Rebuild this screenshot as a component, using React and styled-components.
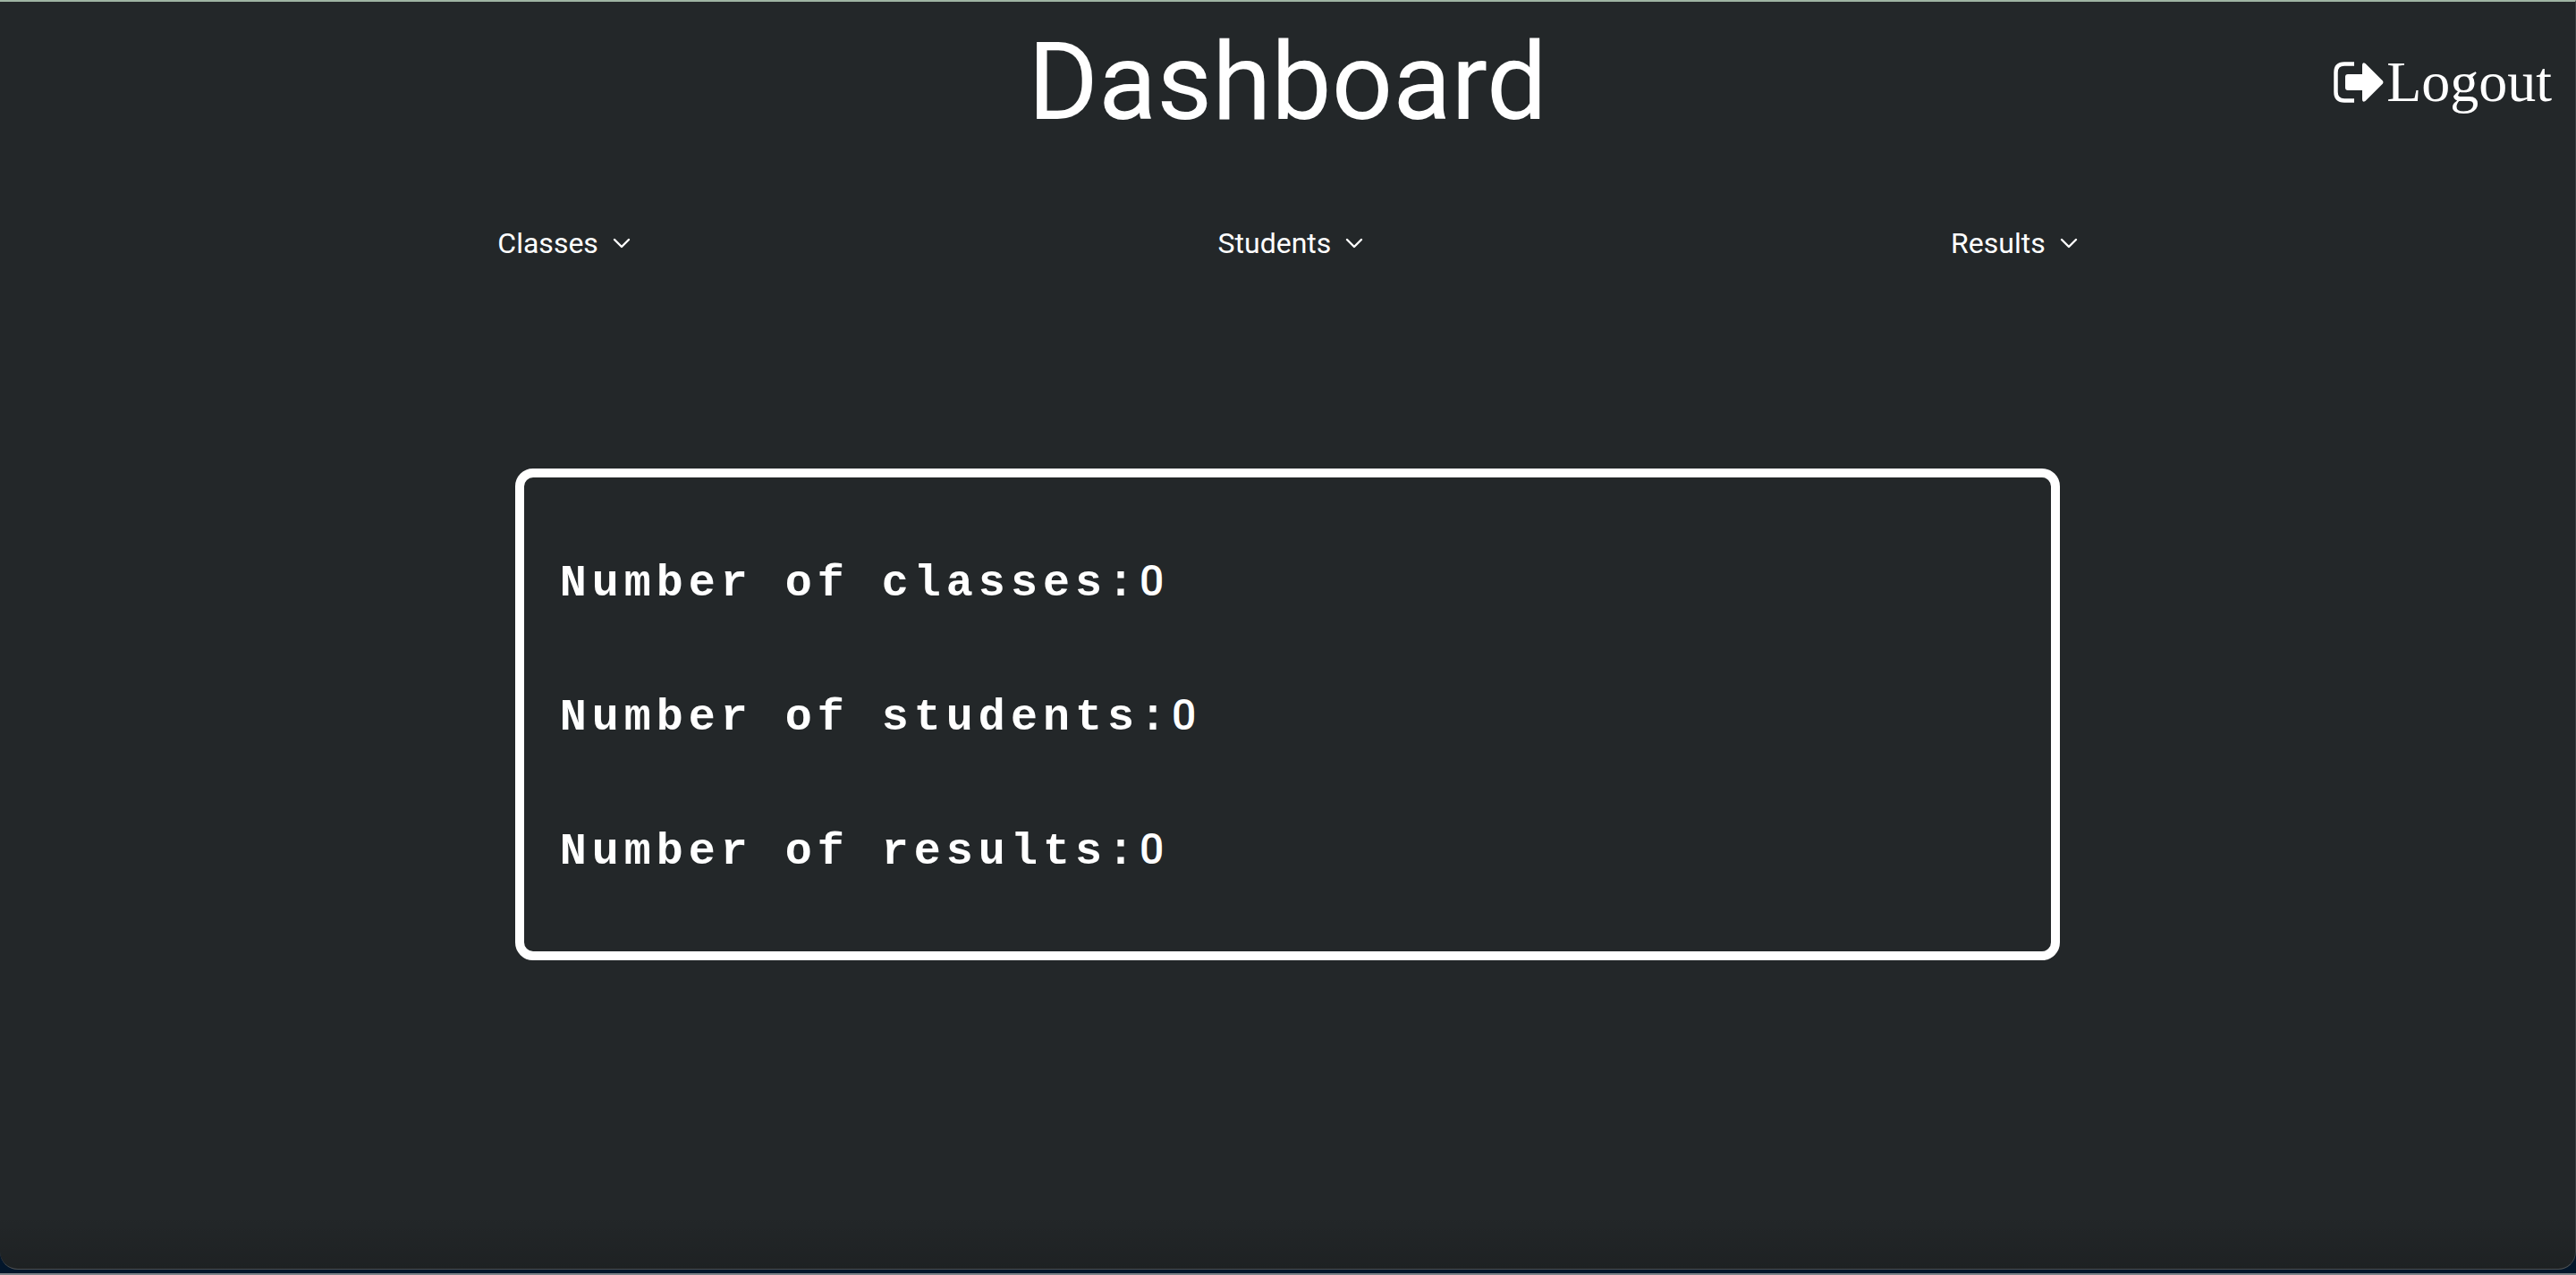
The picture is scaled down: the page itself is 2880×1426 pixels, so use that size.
import React from "react";
import styled, { createGlobalStyle } from "styled-components";

const GlobalStyle = createGlobalStyle`
  * { box-sizing: border-box; }
  html, body, #root { height: 100%; }
  body { margin: 0; background: #03162b; }
`;

const Desktop = styled.div`
  display: flex;
  flex-direction: column;
  min-height: 100vh;
  padding-bottom: 4px;
  background: #03162b;
  border-bottom: 2px solid #7c8288;
`;

const Window = styled.div`
  flex: 1;
  display: flex;
  flex-direction: column;
  color: #fff;
  background: linear-gradient(to bottom, rgba(0, 0, 0, 0) calc(100% - 60px), rgba(0, 0, 0, 0.15)), #232729;
  border-top: 2px solid #9fb5a3;
  border-right: 1px solid #3c4042;
  border-bottom: 1px solid #4c4f51;
  border-radius: 0 0 20px 20px;
`;

const Header = styled.header`
  display: grid;
  grid-template-columns: 1fr auto 1fr;
  align-items: center;
  height: 180px;
  padding: 0 26px;
`;

const Title = styled.h1`
  grid-column: 2;
  margin: 0;
  font: 400 120px/180px Roboto, sans-serif;
`;

const Logout = styled.button`
  justify-self: end;
  display: flex;
  align-items: center;
  gap: 2px;
  padding: 0;
  border: 0;
  background: none;
  color: inherit;
  font: 400 64px/80px "Liberation Serif", serif;
`;

const Nav = styled.nav`
  display: flex;
  justify-content: space-around;
  height: 180px;
  padding: 50px 228px;
`;

const MenuButton = styled.button`
  display: flex;
  align-items: center;
  gap: 16px;
  height: 80px;
  padding: 0;
  border: 0;
  background: none;
  color: inherit;
  font: 400 32px/40px Roboto, sans-serif;
`;

const Stats = styled.main`
  width: 60%;
  margin: 162px auto 0;
  padding: 44px 40px 36px;
  border: 10px solid #fff;
  border-radius: 20px;
`;

const Stat = styled.p`
  margin: 0;
  font: 700 50px/150px "Liberation Mono", monospace;
  letter-spacing: 6px;
`;

const Value = styled.span`
  font: 500 48px/48px Roboto, sans-serif;
`;

const LogoutIcon = () => (
  <svg width="58" height="48" viewBox="0 0 58 48" fill="none" aria-hidden="true">
    <path d="M24 3.500H13Q3.500 3.500 3.500 13V35Q3.500 44.500 13 44.500H24" stroke="currentColor" strokeWidth="4.500" />
    <path d="M17 15H33V5Q33 1 36.500 3L56 22.500Q57 24 56 25.500L36.500 45Q33 47 33 43V33H17Q14 33 14 30V18Q14 15 17 15Z" fill="currentColor" />
  </svg>
);

const Chevron = () => (
  <svg width="20" height="12" viewBox="0 0 20 12" fill="none" aria-hidden="true">
    <path d="M2 2L10 10L18 2" stroke="currentColor" strokeWidth="2.400" strokeLinecap="round" strokeLinejoin="round" />
  </svg>
);

const menus = ["Classes", "Students", "Results"];
const stats = [["classes", 0], ["students", 0], ["results", 0]];

export default function App() {
  return (
    <Desktop>
      <GlobalStyle />
      <Window>
        <Header>
          <Title>Dashboard</Title>
          <Logout type="button"><LogoutIcon />Logout</Logout>
        </Header>
        <Nav>
          {menus.map((name) => (
            <MenuButton key={name} type="button">{name}<Chevron /></MenuButton>
          ))}
        </Nav>
        <Stats>
          {stats.map(([name, count]) => (
            <Stat key={name}>Number of {name}:<Value>{count}</Value></Stat>
          ))}
        </Stats>
      </Window>
    </Desktop>
  );
}
